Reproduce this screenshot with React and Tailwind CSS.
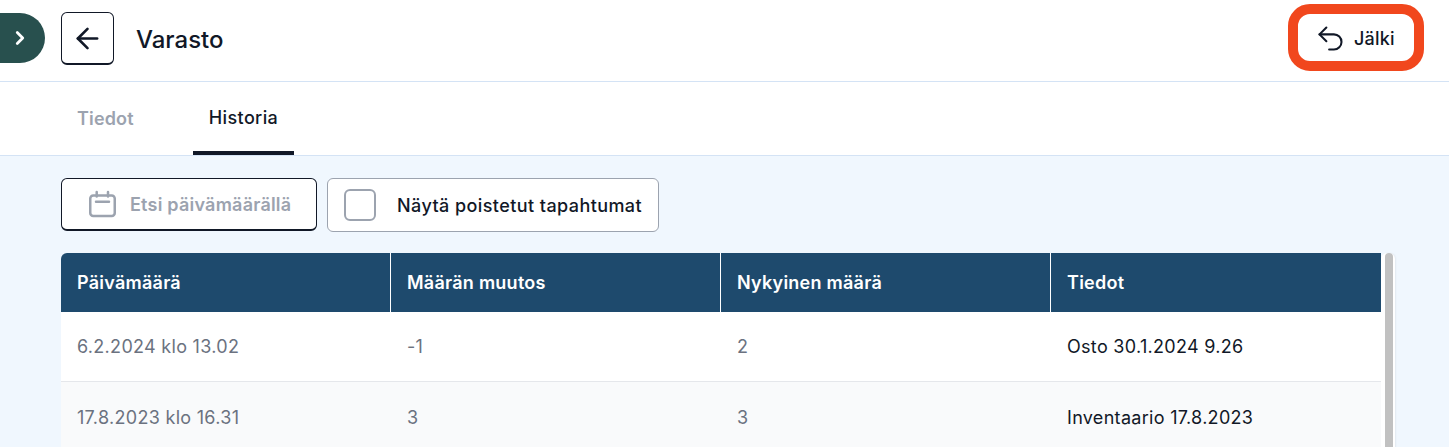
import React from "react";
import { ArrowLeft, ChevronRight, Undo2 } from "lucide-react";

const rows = [
  { date: "6.2.2024 klo 13.02", change: "-1", now: "2", info: "Osto 30.1.2024 9.26", h: "h-[70px]", bg: "bg-white" },
  { date: "17.8.2023 klo 16.31", change: "3", now: "3", info: "Inventaario 17.8.2023", h: "h-[71px]", bg: "bg-[#f9fafb]" },
];

export default function App() {
  return (
    <div className="h-[447px] w-[1449px] overflow-hidden bg-white text-[#111827] font-['Inter',sans-serif]">
      <header className="flex h-[82px] items-center border-b border-[#d4e3f5] pb-[5px]">
        <button className="flex h-[50px] w-[45px] items-center justify-end rounded-r-[25px] bg-[#28504e] pr-[14px] text-white">
          <ChevronRight size={22} strokeWidth={3} />
        </button>
        <button className="ml-4 mt-px flex h-[53px] w-[53px] items-center justify-center rounded-md border border-b-2 border-[#111827] bg-white">
          <ArrowLeft size={33} strokeWidth={1.9} />
        </button>
        <h1 className="ml-[22px] mt-1 text-[24px] font-medium leading-8">Varasto</h1>
        <button className="ml-auto mr-[25px] -mt-px flex h-[67px] w-[136px] items-center rounded-[22px] border-[10px] border-[#f1471d] bg-white pl-4 pt-[2px] text-[18px] font-medium tracking-[0.2px]">
          <Undo2 size={33} strokeWidth={1.5} className="shrink-0" />
          <span className="ml-[7px]">Jälki</span>
        </button>
      </header>

      <nav className="flex h-[74px] items-stretch border-b border-[#d4e3f5] pl-[61px]">
        <div className="flex w-[90px] items-center pb-px pl-4 text-[18px] font-semibold tracking-[0.15px] text-[#9ca3af]">Tiedot</div>
        <div className="ml-[42px] flex w-[101px] items-center justify-center border-b-4 border-[#111827] pt-[2px] text-[18px] font-medium tracking-[0.37px]">Historia</div>
      </nav>

      <main className="h-[291px] bg-[#f0f7fe] pl-[61px] pt-[22px]">
        <div className="flex gap-[10px]">
          <button className="flex h-[53px] w-[256px] items-center gap-[13px] rounded-md border border-b-2 border-[#111827] bg-white pl-[27px] text-[18px] font-semibold tracking-[0.22px] text-[#9ca3af]">
            <svg width="28" height="28" viewBox="0 0 28 28" fill="none" stroke="#9ca3af" strokeWidth="2.5" strokeLinecap="round" strokeLinejoin="round">
              <rect x="1.25" y="5.5" width="24.5" height="20.5" rx="3" />
              <path d="M7.7 2v4.5M19 2v4.5M7 11.7h13" />
            </svg>
            Etsi päivämäärällä
          </button>
          <label className="flex h-[54px] w-[332px] items-center rounded-md border border-[#9ca3af] bg-white pl-4 text-[18px] font-medium tracking-[0.42px]">
            <span className="h-[32px] w-[32px] rounded-md border-2 border-[#9ca3af] bg-white" />
            <span className="ml-[21px]">Näytä poistetut tapahtumat</span>
          </label>
        </div>

        <div className="mt-[21px] flex w-[1334px] items-stretch">
          <div className="w-[1320px]">
            <div className="grid h-[59px] grid-cols-4 overflow-hidden rounded-tl-md bg-[#1e4a6d] text-[18px] font-semibold tracking-[0.25px] text-white">
              <div className="flex items-center border-r border-white pl-4">Päivämäärä</div>
              <div className="flex items-center border-r border-white pl-4">Määrän muutos</div>
              <div className="flex items-center border-r border-white pl-4">Nykyinen määrä</div>
              <div className="flex items-center pl-4">Tiedot</div>
            </div>
            {rows.map((r) => (
              <div key={r.date} className={`grid grid-cols-4 border-b border-[#e5e7eb] text-[18px] tracking-[0.3px] ${r.h} ${r.bg}`}>
                <div className="flex items-center pl-4 text-[#6b7280]">{r.date}</div>
                <div className="flex items-center pl-4 text-[#6b7280]">{r.change}</div>
                <div className="flex items-center pl-4 text-[#6b7280]">{r.now}</div>
                <div className="flex items-center pl-4">{r.info}</div>
              </div>
            ))}
          </div>
          <div className="w-[14px] rounded-t-md bg-white pl-[4px] pr-[2px] shadow-[1px_0_2px_rgba(0,0,0,0.06)]">
            <div className="h-full w-[8px] rounded-t-full bg-[#c1c1c1]" />
          </div>
        </div>
      </main>
    </div>
  );
}
